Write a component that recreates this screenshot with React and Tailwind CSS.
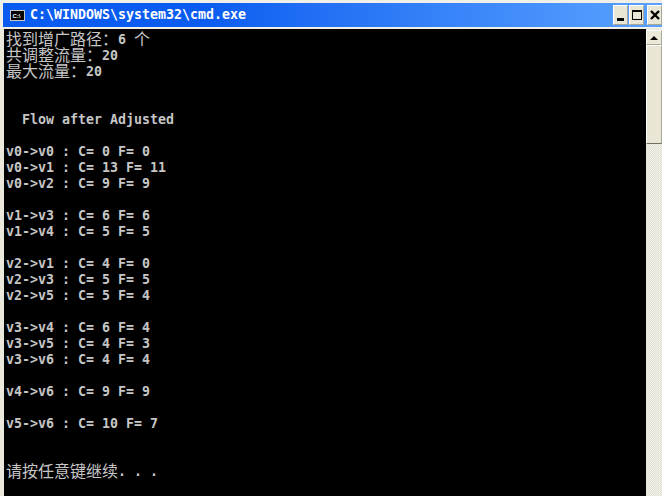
const lines = [
  [['找到增广路径：', true], ['6 ', false], ['个', true]],
  [['共调整流量：', true], ['20', false]],
  [['最大流量：', true], ['20', false]],
  [],
  [],
  [['  Flow after Adjusted', false]],
  [],
  [['v0->v0 : C= 0 F= 0', false]],
  [['v0->v1 : C= 13 F= 11', false]],
  [['v0->v2 : C= 9 F= 9', false]],
  [],
  [['v1->v3 : C= 6 F= 6', false]],
  [['v1->v4 : C= 5 F= 5', false]],
  [],
  [['v2->v1 : C= 4 F= 0', false]],
  [['v2->v3 : C= 5 F= 5', false]],
  [['v2->v5 : C= 5 F= 4', false]],
  [],
  [['v3->v4 : C= 6 F= 4', false]],
  [['v3->v5 : C= 4 F= 3', false]],
  [['v3->v6 : C= 4 F= 4', false]],
  [],
  [['v4->v6 : C= 9 F= 9', false]],
  [],
  [['v5->v6 : C= 10 F= 7', false]],
  [],
  [],
  [['请按任意键继续', true], ['. . .', false]],
];

const Line = ({ parts }) => (
  <div className="h-4 leading-4 whitespace-pre flex">
    {parts.map(([text, wide], i) =>
      wide ? (
        <span key={i} className="text-[16px] font-normal -mt-[2px] font-['Noto_Sans_CJK_SC']">
          {text}
        </span>
      ) : (
        <span key={i}>{text}</span>
      )
    )}
  </div>
);

const TitleButton = ({ children }) => (
  <div className="w-[15px] h-[20px] bg-[#e9e6d6] border border-t-white border-l-white border-r-[#a9a797] border-b-[#a9a797] flex items-center justify-center">
    {children}
  </div>
);

const App = () => {
  return (
    <div className="w-[662px] h-[496px] overflow-hidden flex flex-col bg-[#ece9d8] font-['DejaVu_Sans_Mono']">
      <div className="h-[29px] shrink-0 pt-[3px] pb-[2px] pl-[3px] bg-[#f1f0e8]">
        <div className="h-full bg-gradient-to-r from-[#0a5cf0] from-30% to-[#5aa2ff] flex items-center pl-[7px]">
          <svg width="15" height="11" viewBox="0 0 15 11" className="shrink-0">
            <rect x="0" y="0" width="15" height="11" fill="#c8c8c8" />
            <rect x="1" y="1" width="13" height="9" fill="#000" />
            <text x="2.5" y="8" fontSize="6" fontWeight="700" fill="#fff" fontFamily="Liberation Sans">C:\</text>
          </svg>
          <div className="ml-[5px] flex-1 text-white font-bold text-[13.29px] leading-4 whitespace-pre">C:\WINDOWS\system32\cmd.exe</div>
          <div className="flex items-center">
            <TitleButton>
              <div className="w-[7px] h-[3px] bg-black mt-[9px] -ml-[1px]" />
            </TitleButton>
            <div className="ml-[1px]">
              <TitleButton>
                <div className="w-[10px] h-[10px] border border-t-2 border-black" />
              </TitleButton>
            </div>
            <div className="ml-[3px]">
              <TitleButton>
                <svg width="10" height="10" viewBox="0 0 10 10">
                  <path d="M1 1 L9 9 M9 1 L1 9" stroke="#000" strokeWidth="2.4" />
                </svg>
              </TitleButton>
            </div>
          </div>
        </div>
      </div>
      <div className="flex-1 flex min-h-0">
        <div className="w-[4px] shrink-0 bg-[#ebe9dc]" />
        <div className="flex-1 bg-black text-[#c6c6c6] font-bold text-[13.29px] pt-[3px] pl-[2px]">
          {lines.map((parts, i) => (
            <Line key={i} parts={parts} />
          ))}
        </div>
        <div className="w-[16px] shrink-0 flex flex-col bg-[repeating-conic-gradient(#f6f5ee_0_25%,#dedccd_0_50%)] bg-[length:2px_2px]">
          <div className="h-[15px] mt-[1px] bg-[#ece9d8] border border-t-white border-l-white border-r-[#a9a797] border-b-[#a9a797] flex items-center justify-center">
            <div className="w-0 h-0 border-x-[4px] border-x-transparent border-b-[4px] border-b-black" />
          </div>
          <div className="h-[99px] bg-[#e9e6d6] border border-t-white border-l-white border-r-[#a9a797] border-b-[#716f64]" />
        </div>
      </div>
    </div>
  );
};

export default App;
